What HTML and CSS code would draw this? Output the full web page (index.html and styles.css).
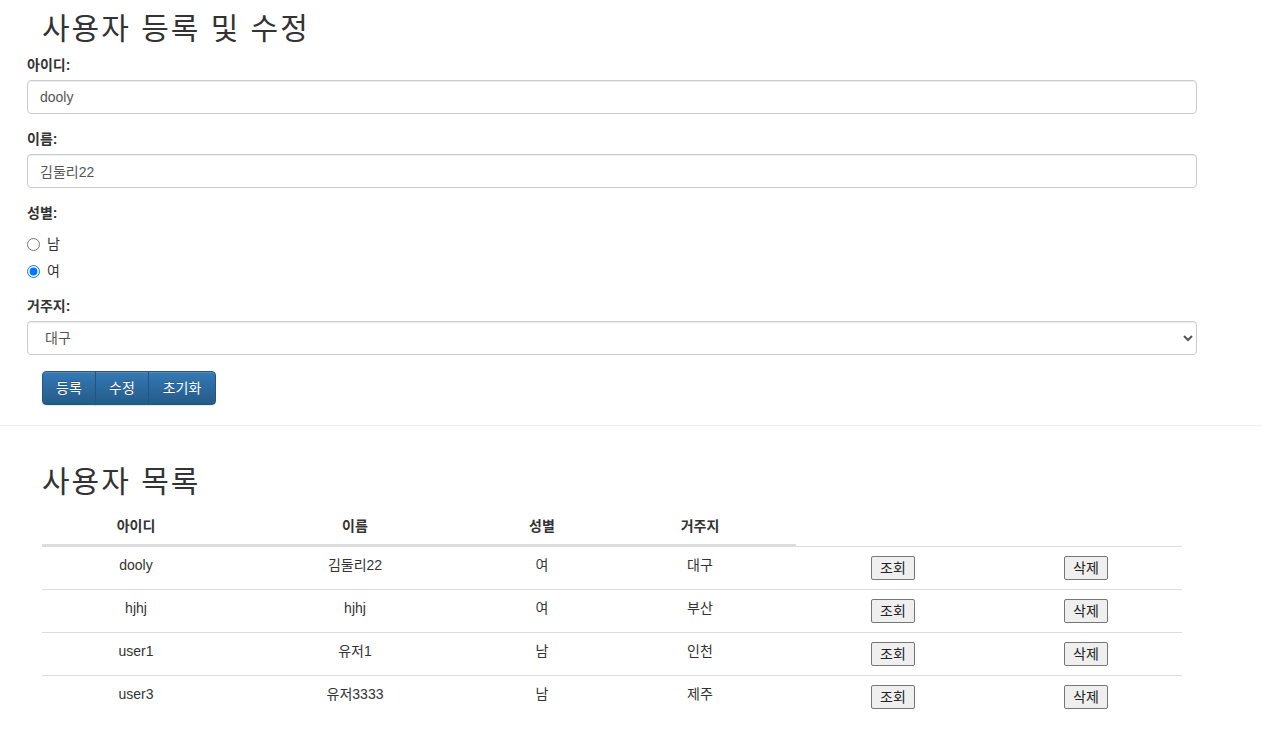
FILE: index.html
```html
<!DOCTYPE html>
<html lang="ko">
<head>
  <meta charset="UTF-8">
  <meta name="viewport" content="width=device-width, initial-scale=1.0">
  <title>사용자 관리</title>
  <link rel="stylesheet" href="styles.css">
</head>
<body>
  <div class="user-form">
    <h2 class="page-title">사용자 등록 및 수정</h2>

    <div class="form-group">
      <label class="form-label" for="userId">아이디:</label>
      <input class="form-control" id="userId" type="text" value="dooly">
    </div>

    <div class="form-group">
      <label class="form-label" for="userName">이름:</label>
      <input class="form-control" id="userName" type="text" value="김둘리22">
    </div>

    <div class="form-group">
      <label class="form-label">성별:</label>
      <div class="radio-list">
        <label class="radio-item"><input type="radio" name="gender" value="M"> 남</label>
        <label class="radio-item"><input type="radio" name="gender" value="F" checked> 여</label>
      </div>
    </div>

    <div class="form-group">
      <label class="form-label" for="userAddr">거주지:</label>
      <select class="form-control form-select" id="userAddr">
        <option>서울</option>
        <option>부산</option>
        <option selected>대구</option>
        <option>인천</option>
        <option>제주</option>
      </select>
    </div>

    <div class="btn-group">
      <button class="btn btn-primary" type="button">등록</button>
      <button class="btn btn-primary" type="button">수정</button>
      <button class="btn btn-primary btn-wide" type="button">초기화</button>
    </div>
  </div>

  <hr class="divider">

  <div class="user-list">
    <h2 class="page-title page-title--list">사용자 목록</h2>
    <table class="user-table">
      <colgroup>
        <col class="col-id">
        <col class="col-name">
        <col class="col-gender">
        <col class="col-addr">
        <col class="col-btn">
        <col class="col-btn2">
      </colgroup>
      <thead>
        <tr>
          <th>아이디</th>
          <th>이름</th>
          <th>성별</th>
          <th>거주지</th>
        </tr>
      </thead>
      <tbody>
        <tr>
          <td>dooly</td>
          <td>김둘리22</td>
          <td>여</td>
          <td>대구</td>
          <td><button class="row-btn" type="button">조회</button></td>
          <td><button class="row-btn" type="button">삭제</button></td>
        </tr>
        <tr>
          <td>hjhj</td>
          <td>hjhj</td>
          <td>여</td>
          <td>부산</td>
          <td><button class="row-btn" type="button">조회</button></td>
          <td><button class="row-btn" type="button">삭제</button></td>
        </tr>
        <tr>
          <td>user1</td>
          <td>유저1</td>
          <td>남</td>
          <td>인천</td>
          <td><button class="row-btn" type="button">조회</button></td>
          <td><button class="row-btn" type="button">삭제</button></td>
        </tr>
        <tr>
          <td>user3</td>
          <td>유저3333</td>
          <td>남</td>
          <td>제주</td>
          <td><button class="row-btn" type="button">조회</button></td>
          <td><button class="row-btn" type="button">삭제</button></td>
        </tr>
      </tbody>
    </table>
  </div>
</body>
</html>
```

FILE: styles.css
```css
/* base */
body {
  margin: 0;
  font-family: "Liberation Sans", "Noto Sans CJK KR", sans-serif;
  font-size: 14px;
  line-height: 20px;
  color: #333;
  background: #fff;
}

button,
input,
select {
  font-family: inherit;
  font-size: inherit;
  line-height: inherit;
}

.page-title {
  font-size: 30px;
  font-weight: normal;
  line-height: 33px;
  letter-spacing: 2px;
  margin: 12px 0 10px;
  padding-left: 15px;
}

/* form */
.user-form {
  width: 1170px;
  margin-left: 27px;
}

.form-group {
  margin-bottom: 15px;
}

.form-label {
  display: block;
  font-weight: bold;
  margin-bottom: 5px;
}

.form-control {
  display: block;
  box-sizing: border-box;
  width: 100%;
  height: 34px;
  padding: 6px 12px;
  color: #555;
  background: #fff;
  border: 1px solid #ccc;
  border-radius: 4px;
  box-shadow: inset 0 1px 1px rgba(0,0,0,.075);
  outline: 0;
}

.form-select {
  margin-top: 1px;
  padding-left: 13px;
}

.radio-list {
  display: flex;
  flex-direction: column;
  gap: 7px;
  margin-top: 11px;
}

.radio-item {
  display: flex;
  align-items: center;
  gap: 6px;
  height: 20px;
  font-weight: normal;
}

.radio-item input {
  width: 13px;
  height: 13px;
  margin: 0 1px 0 0;
}

.btn-group {
  display: flex;
  margin: 16px 0 0 15px;
}

.btn {
  min-width: 54px;
  height: 34px;
  padding: 6px 12px;
  border: 1px solid transparent;
  cursor: pointer;
  white-space: nowrap;
}

.btn-wide {
  min-width: 68px;
}

.btn-primary {
  color: #fff;
  background-image: linear-gradient(to bottom, #337ab7 0, #265a88 100%);
  border-color: #245580;
  text-shadow: 0 -1px 0 rgba(0,0,0,.2);
  box-shadow: inset 0 1px 0 rgba(255,255,255,.15), 0 1px 1px rgba(0,0,0,.075);
}

.btn-group .btn + .btn {
  margin-left: -1px;
}

.btn-group .btn:first-child {
  border-radius: 4px 0 0 4px;
}

.btn-group .btn:last-child {
  border-radius: 0 4px 4px 0;
}

.btn-group .btn:not(:first-child):not(:last-child) {
  border-radius: 0;
}

.divider {
  border: 0;
  border-top: 1px solid #eee;
  margin: 20px 0 39px;
}

/* list */
.user-list {
  width: 1140px;
  margin-left: 27px;
}

.page-title--list {
  margin-top: 0;
}

.user-table {
  width: 1140px;
  margin-left: 15px;
  margin-top: 2px;
  table-layout: fixed;
  border-collapse: separate;
  border-spacing: 0;
}

.col-id { width: 188px; }
.col-name { width: 250px; }
.col-gender { width: 124px; }
.col-addr { width: 192px; }
.col-btn { width: 194px; }
.col-btn2 { width: 192px; }

.user-table th {
  padding: 8px;
  text-align: center;
  font-weight: bold;
  border-bottom: 2px solid #ddd;
}

.user-table td {
  height: 26px;
  padding: 8px;
  text-align: center;
  vertical-align: top;
  border-top: 1px solid #ddd;
}

.row-btn {
  margin-top: 1px;
  padding: 1px 8px;
  color: #222;
  background: #efefef;
  border: 1px solid #767676;
  border-radius: 2px;
}
```
